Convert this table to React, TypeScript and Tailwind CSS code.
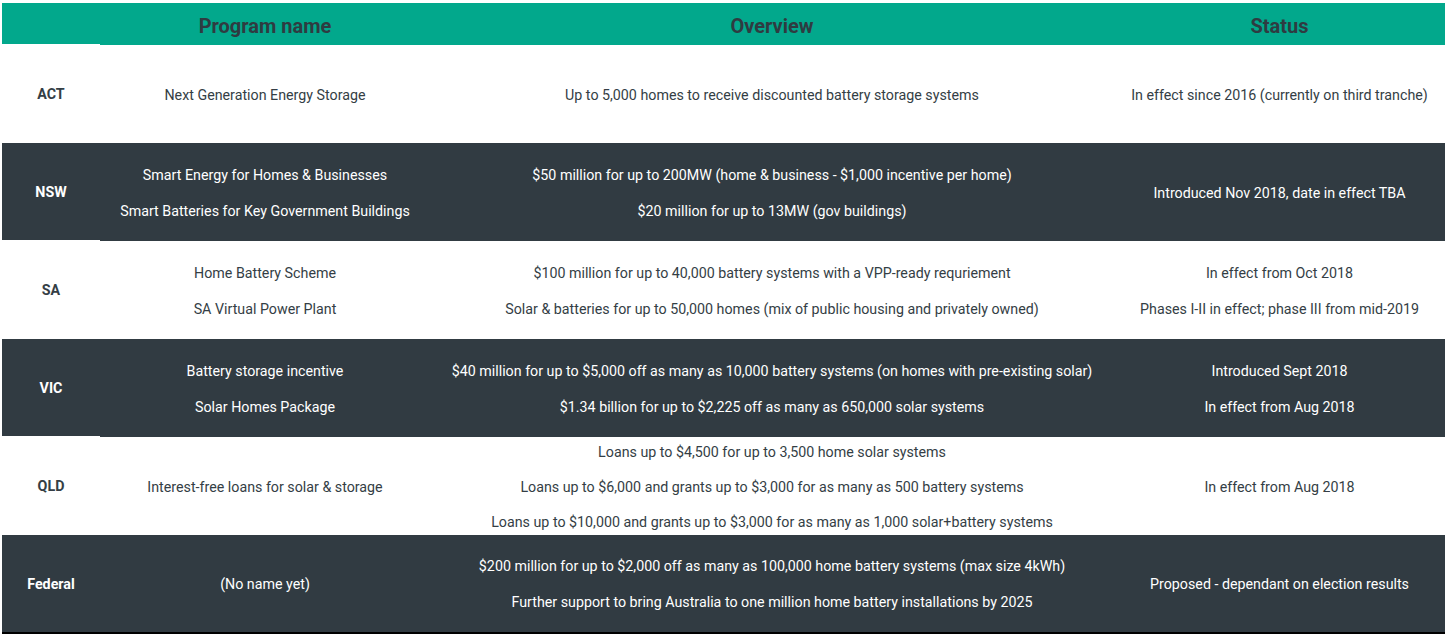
import React from 'react';

interface Row {
  state: string;
  programs: string[];
  overview: string[];
  status: string[];
}

const rows: Row[] = [
  {
    state: 'ACT',
    programs: ['Next Generation Energy Storage'],
    overview: ['Up to 5,000 homes to receive discounted battery storage systems'],
    status: ['In effect since 2016 (currently on third tranche)'],
  },
  {
    state: 'NSW',
    programs: ['Smart Energy for Homes & Businesses', 'Smart Batteries for Key Government Buildings'],
    overview: [
      '$50 million for up to 200MW (home & business - $1,000 incentive per home)',
      '$20 million for up to 13MW (gov buildings)',
    ],
    status: ['Introduced Nov 2018, date in effect TBA'],
  },
  {
    state: 'SA',
    programs: ['Home Battery Scheme', 'SA Virtual Power Plant'],
    overview: [
      '$100 million for up to 40,000 battery systems with a VPP-ready requriement',
      'Solar & batteries for up to 50,000 homes (mix of public housing and privately owned)',
    ],
    status: ['In effect from Oct 2018', 'Phases I-II in effect; phase III from mid-2019'],
  },
  {
    state: 'VIC',
    programs: ['Battery storage incentive', 'Solar Homes Package'],
    overview: [
      '$40 million for up to $5,000 off as many as 10,000 battery systems (on homes with pre-existing solar)',
      '$1.34 billion for up to $2,225 off as many as 650,000 solar systems',
    ],
    status: ['Introduced Sept 2018', 'In effect from Aug 2018'],
  },
  {
    state: 'QLD',
    programs: ['Interest-free loans for solar & storage'],
    overview: [
      'Loans up to $4,500 for up to 3,500 home solar systems',
      'Loans up to $6,000 and grants up to $3,000 for as many as 500 battery systems',
      'Loans up to $10,000 and grants up to $3,000 for as many as 1,000 solar+battery systems',
    ],
    status: ['In effect from Aug 2018'],
  },
  {
    state: 'Federal',
    programs: ['(No name yet)'],
    overview: [
      '$200 million for up to $2,000 off as many as 100,000 home battery systems (max size 4kWh)',
      'Further support to bring Australia to one million home battery installations by 2025',
    ],
    status: ['Proposed - dependant on election results'],
  },
];

const Cell: React.FC<{ lines: string[] }> = ({ lines }) => (
  <div
    className={`flex flex-col items-center justify-center pt-[2px] text-center ${
      lines.length > 2 ? 'gap-[18px]' : 'gap-[19px]'
    }`}
  >
    {lines.map((l) => (
      <p key={l} className="leading-[17px]">
        {l}
      </p>
    ))}
  </div>
);

export default function App() {
  return (
    <div className="bg-white w-[1450px] h-[640px] pt-[3px] pl-[2px] font-['Roboto',_'Liberation_Sans',_sans-serif] text-[14.25px] text-[#343e45]">
      <div className="w-[1443px]">
        <div className="grid grid-cols-[98px_330px_684px_331px] h-[42px] bg-[#02a88c] text-[20px] font-bold text-[#2f3b41]">
          <div className="border-b border-white" />
          <div className="flex items-center justify-center pt-[4px]">Program name</div>
          <div className="flex items-center justify-center pt-[4px]">Overview</div>
          <div className="flex items-center justify-center pt-[4px]">Status</div>
        </div>
        {rows.map((r, i) => {
          const dark = i % 2 === 1;
          const last = i === rows.length - 1;
          return (
            <div
              key={r.state}
              className={`grid grid-cols-[98px_330px_684px_331px] h-[98px] ${
                dark ? 'bg-[#313b42] text-white' : 'bg-white'
              } ${last ? 'border-b-2 border-black h-[99px]' : ''}`}
            >
              <div
                className={`flex items-center justify-center pt-[3px] font-bold ${
                  last ? '' : 'border-b border-white'
                }`}
              >
                {r.state}
              </div>
              <Cell lines={r.programs} />
              <Cell lines={r.overview} />
              <Cell lines={r.status} />
            </div>
          );
        })}
      </div>
    </div>
  );
}
